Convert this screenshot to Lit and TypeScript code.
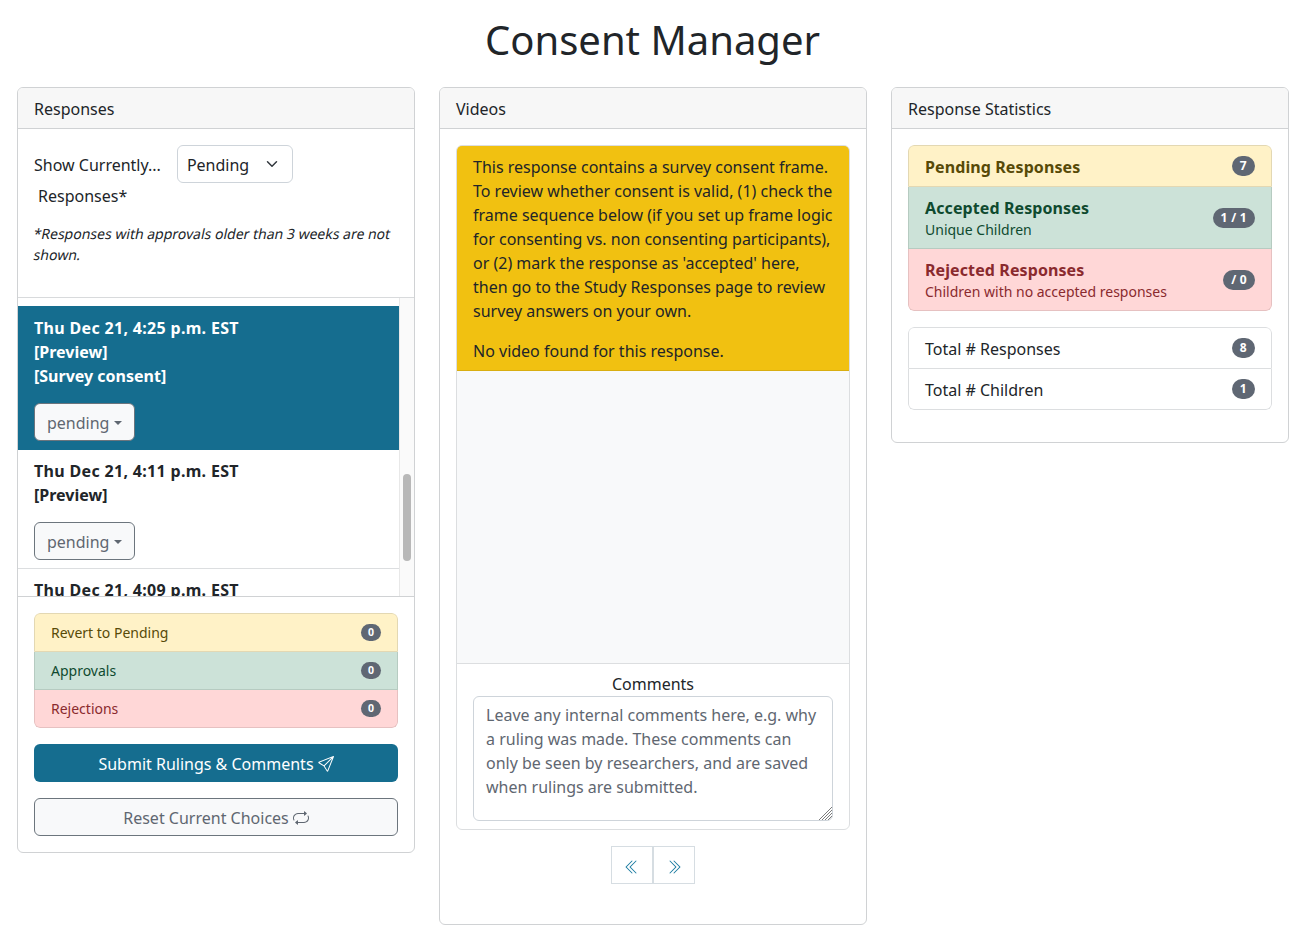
import { LitElement, css, html, svg } from "lit";
import { customElement } from "lit/decorators.js";

const sendIcon = svg`<path d="M15.854.146a.5.5 0 0 1 .11.54l-5.819 14.547a.75.75 0 0 1-1.329.124l-3.178-4.995L.643 7.184a.75.75 0 0 1 .124-1.33L15.314.037a.5.5 0 0 1 .54.11ZM6.636 10.07l2.761 4.338L14.13 2.576 6.636 10.07Zm6.787-8.201L1.591 6.602l4.339 2.76 7.494-7.493Z"></path>`;
const repeatIcon = svg`<path d="M11 5.466V4H5a4 4 0 0 0-3.584 5.777.5.5 0 1 1-.896.446A5 5 0 0 1 5 3h6V1.534a.25.25 0 0 1 .41-.192l2.36 1.966c.12.1.12.284 0 .384l-2.36 1.966a.25.25 0 0 1-.41-.192Zm3.81.086a.5.5 0 0 1 .67.225A5 5 0 0 1 11 13H5v1.466a.25.25 0 0 1-.41.192l-2.36-1.966a.25.25 0 0 1 0-.384l2.36-1.966a.25.25 0 0 1 .41.192V12h6a4 4 0 0 0 3.585-5.777.5.5 0 0 1 .225-.67Z"></path>`;
const doubleLeft = svg`<path d="M8.354 1.646a.5.5 0 0 1 0 .708L2.707 8l5.647 5.646a.5.5 0 0 1-.708.708l-6-6a.5.5 0 0 1 0-.708l6-6a.5.5 0 0 1 .708 0z"></path><path d="M12.354 1.646a.5.5 0 0 1 0 .708L6.707 8l5.647 5.646a.5.5 0 0 1-.708.708l-6-6a.5.5 0 0 1 0-.708l6-6a.5.5 0 0 1 .708 0z"></path>`;
const doubleRight = svg`<path d="M1.646 1.646a.5.5 0 0 1 .708 0l6 6a.5.5 0 0 1 0 .708l-6 6a.5.5 0 0 1-.708-.708L7.293 8 1.646 2.354a.5.5 0 0 1 0-.708z"></path><path d="M5.646 1.646a.5.5 0 0 1 .708 0l6 6a.5.5 0 0 1 0 .708l-6 6a.5.5 0 0 1-.708-.708L11.293 8 5.646 2.354a.5.5 0 0 1 0-.708z"></path>`;

const icon = (paths: unknown) => html`<svg class="bi" viewBox="0 0 16 16" fill="currentColor" aria-hidden="true">${paths}</svg>`;

const responses = [
  { lines: ["Thu Dec 21, 4:25 p.m. EST", "[Preview]", "[Survey consent]"], active: true },
  { lines: ["Thu Dec 21, 4:11 p.m. EST", "[Preview]"], active: false },
  { lines: ["Thu Dec 21, 4:09 p.m. EST", "[Preview]"], active: false },
];

const rulings = [
  { label: "Revert to Pending", tone: "warn" },
  { label: "Approvals", tone: "ok" },
  { label: "Rejections", tone: "bad" },
];

const stats = [
  { title: "Pending Responses", sub: "", count: "7", tone: "warn" },
  { title: "Accepted Responses", sub: "Unique Children", count: "1 / 1", tone: "ok" },
  { title: "Rejected Responses", sub: "Children with no accepted responses", count: "/ 0", tone: "bad" },
];

const PLACEHOLDER =
  "Leave any internal comments here, e.g. why a ruling was made. These comments can only be seen by researchers, and are saved when rulings are submitted.";

@customElement("app-root")
export class AppRoot extends LitElement {
  protected override render() {
    return html`
      <h1>Consent Manager</h1>
      <div class="columns">
        <section class="card">
          <div class="card-header">Responses</div>
          <div class="filter">
            <div class="filter-row">
              <span>Show Currently...</span>
              <div class="select">
                <span>Pending</span>
                <svg viewBox="0 0 16 16" aria-hidden="true"><path d="m2 5 6 6 6-6" fill="none" stroke="#343a40" stroke-width="2" stroke-linecap="round" stroke-linejoin="round"></path></svg>
              </div>
            </div>
            <div class="filter-tail">Responses*</div>
            <div class="note">
              <div><span>*Responses with approvals older than 3 weeks are not</span></div>
              <div><span>shown.</span></div>
            </div>
          </div>
          <div class="response-pane">
            <div class="response-list">
              ${responses.map(
                (r) => html`
                  <div class="response ${r.active ? "active" : ""}">
                    ${r.lines.map((line) => html`<div class="response-line">${line}</div>`)}
                    <button class="btn-outline status">pending<span class="caret"></span></button>
                  </div>
                `,
              )}
            </div>
            <div class="scrollbar"><div class="thumb"></div></div>
          </div>
          <div class="footer">
            <div class="list">
              ${rulings.map(
                (r) => html`
                  <div class="list-row small ${r.tone}">
                    <span>${r.label}</span>
                    <span class="badge">0</span>
                  </div>
                `,
              )}
            </div>
            <button class="btn-primary">Submit Rulings &amp; Comments ${icon(sendIcon)}</button>
            <button class="btn-outline wide">Reset Current Choices ${icon(repeatIcon)}</button>
          </div>
        </section>

        <section class="card">
          <div class="card-header">Videos</div>
          <div class="video-body">
            <div class="inner">
              <div class="alert">
                <div>
                  This response contains a survey consent frame. To review whether consent is valid, (1) check the frame
                  sequence below (if you set up frame logic for consenting vs. non consenting participants), or (2) mark
                  the response as 'accepted' here, then go to the Study Responses page to review survey answers on your
                  own.
                </div>
                <div class="alert-gap">No video found for this response.</div>
              </div>
              <div class="player"></div>
              <div class="comments">
                <label for="comments">Comments</label>
                <div class="textarea-wrap">
                  <textarea id="comments" placeholder=${PLACEHOLDER}></textarea>
                  <svg class="grip" viewBox="0 0 14 14" aria-hidden="true">
                    <path d="M1 14 14 1M4 14 14 4M7 14l7-7M10 14l4-4" fill="none" stroke="#7d7d7d" stroke-width="1"></path>
                  </svg>
                </div>
              </div>
            </div>
            <div class="pager">
              <button class="page">${icon(doubleLeft)}</button>
              <button class="page next">${icon(doubleRight)}</button>
            </div>
          </div>
        </section>

        <section class="card">
          <div class="card-header">Response Statistics</div>
          <div class="stats-body">
            <div class="list">
              ${stats.map(
                (s) => html`
                  <div class="list-row ${s.tone}">
                    <div>
                      <div class="stat-title">${s.title}</div>
                      ${s.sub ? html`<div class="stat-sub">${s.sub}</div>` : ""}
                    </div>
                    <span class="badge">${s.count}</span>
                  </div>
                `,
              )}
            </div>
            <div class="list">
              <div class="list-row"><div class="stat-label">Total # Responses</div><span class="badge">8</span></div>
              <div class="list-row"><div class="stat-label">Total # Children</div><span class="badge">1</span></div>
            </div>
          </div>
        </section>
      </div>
    `;
  }

  public static override styles = css`
    :host {
      display: block;
      min-height: 934px;
      background: #fff;
      color: #212529;
      font-family: "Noto Sans", sans-serif;
      font-size: 16px;
      line-height: 24px;
    }

    * {
      box-sizing: border-box;
    }

    h1 {
      margin: 0;
      padding: 16px 0 0 2px;
      height: 87px;
      font-size: 40px;
      font-weight: 400;
      line-height: 48px;
      text-align: center;
    }

    .columns {
      display: grid;
      grid-template-columns: 398px 428px 398px;
      gap: 24px;
      align-items: start;
      padding-left: 17px;
    }

    .card {
      border: 1px solid #d0d2d4;
      border-radius: 6px;
      background: #fff;
      overflow: hidden;
    }

    .card-header {
      height: 41px;
      padding: 9px 16px 0;
      background: #f7f7f7;
      border-bottom: 1px solid #d0d2d4;
    }

    .filter {
      height: 169px;
      padding: 16px 16px 0;
      border-bottom: 1px solid #d8dadc;
    }

    .filter-row {
      display: flex;
      align-items: center;
      gap: 16px;
    }

    .filter-row > span,
    .select > span {
      padding-top: 2px;
    }

    .select {
      display: flex;
      align-items: center;
      justify-content: space-between;
      width: 116px;
      height: 38px;
      padding: 0 14px 0 9px;
      border: 1px solid #ced4da;
      border-radius: 6px;
    }

    .select svg {
      width: 12px;
      height: 12px;
    }

    .filter-tail {
      padding: 1px 0 0 4px;
    }

    .note {
      margin: 15px 0 0;
      font-size: 14px;
      line-height: 21px;
    }

    /* the reference shows a slanted regular face, wider than Noto's true italic */
    .note span {
      display: inline-block;
      transform: skewX(-12deg);
    }

    .response-pane {
      display: grid;
      grid-template-columns: 1fr 15px;
      height: 299px;
      border-bottom: 1px solid #d0d2d4;
      overflow: hidden;
    }

    .response-list {
      padding-top: 8px;
      min-width: 0;
    }

    .response {
      padding: 9px 16px 8px;
      border-bottom: 1px solid #dcdee0;
      font-weight: 700;
    }

    .response.active {
      padding-top: 10px;
      padding-bottom: 9px;
      border-bottom: 0;
      background: #156d8f;
      color: #fff;
    }

    .response-line {
      height: 24px;
    }

    .response-line:first-child {
      letter-spacing: 0.32px;
    }

    .btn-outline {
      display: block;
      height: 38px;
      padding-top: 2px;
      border: 1px solid #6c757d;
      border-radius: 6px;
      background: #f8f9fa;
      color: #5f6771;
      font: inherit;
      font-weight: 400;
    }

    .status {
      margin-top: 15px;
      padding: 2px 12px 0;
    }

    .caret {
      display: inline-block;
      margin-left: 5px;
      vertical-align: 4px;
      border-top: 4.8px solid currentColor;
      border-left: 4.8px solid transparent;
      border-right: 4.8px solid transparent;
    }

    .scrollbar {
      position: relative;
      background: #fafafa;
      border-left: 1px solid #e8e8e8;
    }

    .thumb {
      position: absolute;
      top: 176px;
      left: 3px;
      width: 8px;
      height: 87px;
      border-radius: 4px;
      background: #b8b8b8;
    }

    .footer {
      display: flex;
      flex-direction: column;
      gap: 16px;
      padding: 16px;
    }

    .list {
      border-radius: 6px;
      overflow: hidden;
    }

    .list-row {
      display: flex;
      align-items: center;
      justify-content: space-between;
      min-height: 41px;
      padding: 8px 16px;
      border: 1px solid #dcdee0;
      border-top: 0;
    }

    .list-row:first-child {
      min-height: 42px;
      border-top: 1px solid #dcdee0;
      border-radius: 6px 6px 0 0;
    }

    .list-row:last-child {
      border-radius: 0 0 6px 6px;
    }

    .list-row.small {
      min-height: 0;
      height: 38px;
      font-size: 14px;
      line-height: 21px;
    }

    .list-row.small:first-child {
      height: 39px;
    }

    .list-row.warn {
      background: #fff2c7;
      color: #574a07;
      border-color: #e3d8b3;
    }

    .list-row.ok {
      background: #cce2d8;
      color: #0f4a2f;
      border-color: #b6cbc1;
    }

    .list-row.bad {
      background: #ffd7d7;
      color: #8a2a2e;
      border-color: #e6c1c1;
    }

    .badge {
      flex: none;
      padding: 3px 8px;
      border-radius: 10px;
      background: #5f6773;
      color: #fff;
      font-size: 12px;
      font-weight: 700;
      line-height: 14px;
      letter-spacing: 0.3px;
      white-space: pre;
    }

    .small .badge {
      padding: 2px 7px;
      font-size: 10.5px;
      line-height: 13px;
      letter-spacing: 0;
    }

    .btn-primary {
      display: flex;
      align-items: center;
      justify-content: center;
      gap: 4px;
      height: 38px;
      padding-top: 2px;
      border: 0;
      border-radius: 6px;
      background: #156d8f;
      color: #fff;
      font: inherit;
    }

    .wide {
      display: flex;
      align-items: center;
      justify-content: center;
      gap: 4px;
    }

    .bi {
      width: 16px;
      height: 16px;
    }

    .video-body {
      height: 795px;
      padding: 16px;
    }

    .inner {
      border: 1px solid #dcdee0;
      border-radius: 6px;
      overflow: hidden;
    }

    .alert {
      height: 226px;
      margin: -1px -1px 0;
      padding: 9px 16px;
      background: #f1c111;
      border: 1px solid #d9ae10;
      border-radius: 6px 6px 0 0;
    }

    .alert-gap {
      margin-top: 16px;
    }

    .player {
      height: 293px;
      background: #f8f9fa;
      border-bottom: 1px solid #dcdee0;
    }

    .comments {
      height: 165px;
      padding: 8px 16px;
      text-align: center;
    }

    .comments label {
      display: block;
      height: 24px;
    }

    .textarea-wrap {
      position: relative;
      width: 360px;
      height: 125px;
    }

    textarea {
      display: block;
      width: 100%;
      height: 100%;
      padding: 6px 12px;
      border: 1px solid #ced4da;
      border-radius: 6px;
      background: #fff;
      color: #212529;
      font: inherit;
      resize: none;
    }

    textarea::placeholder {
      color: #5f6771;
      opacity: 1;
    }

    .grip {
      position: absolute;
      right: 1px;
      bottom: 1px;
      width: 14px;
      height: 14px;
    }

    .pager {
      display: flex;
      justify-content: center;
      margin-top: 16px;
    }

    .page {
      display: flex;
      align-items: center;
      justify-content: center;
      width: 42px;
      height: 38px;
      padding: 4px 0 0;
      border: 1px solid #d6dde2;
      background: #fff;
      color: #1b7ba1;
    }

    .page.next {
      padding: 4px 0 0 4px;
    }

    .stats-body {
      display: flex;
      flex-direction: column;
      gap: 16px;
      padding: 16px 16px 32px;
    }

    .stat-title {
      padding-top: 1px;
      margin-bottom: -1px;
      font-weight: 700;
      letter-spacing: 0.1px;
    }

    .stat-label {
      padding-top: 1px;
      margin-bottom: -1px;
    }

    .stat-sub {
      font-size: 14px;
      line-height: 21px;
    }
  `;
}

declare global {
  interface HTMLElementTagNameMap {
    "app-root": AppRoot;
  }
}
